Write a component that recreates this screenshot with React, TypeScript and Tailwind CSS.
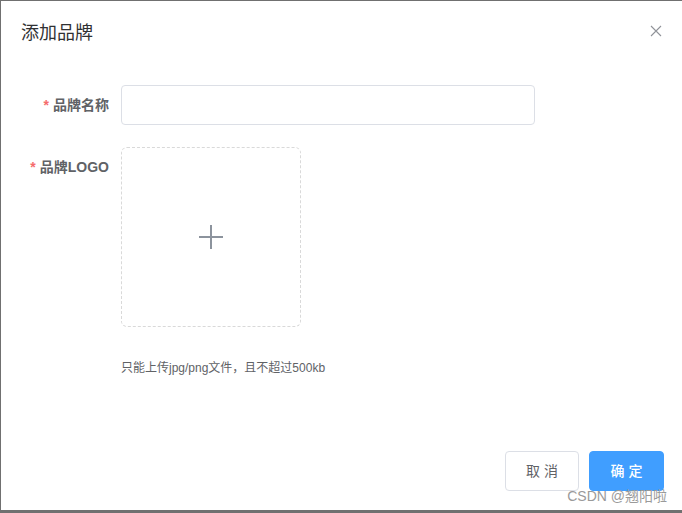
const cjk = '"Helvetica Neue", "Liberation Sans", "Noto Sans CJK SC", sans-serif';

function Label({ text }: { text: string }) {
  return (
    <div className="w-[100px] shrink-0 pr-3 text-right text-sm font-bold leading-10 text-[#606266]">
      <span className="mr-1 text-[#f56c6c]">*</span>
      {text}
    </div>
  );
}

export default function App() {
  return (
    <div className="relative h-[513px] w-[682px] overflow-hidden bg-white" style={{ fontFamily: cjk }}>
      <div className="flex h-[513px] flex-col border-t border-l border-b-[3px] border-[#707070] bg-white">
        {/* header */}
        <div className="flex items-start justify-between pt-5 pr-[18px] pb-[10px] pl-5">
          <span className="text-lg leading-6 text-[#303133]">添加品牌</span>
          <button type="button" className="mt-[4px] mr-[2px] text-[#909399]" aria-label="close">
            <svg width="12" height="12" viewBox="0 0 12 12" stroke="currentColor" strokeWidth="1.1">
              <path d="M1 1 L11 11 M11 1 L1 11" />
            </svg>
          </button>
        </div>

        {/* body */}
        <div className="flex-1 pt-[30px] pr-[18px] pl-5">
          <div className="mb-[22px] flex">
            <Label text="品牌名称" />
            <div className="h-10 w-[414px] rounded border border-[#dcdfe6] bg-white" />
          </div>
          <div className="flex">
            <Label text="品牌LOGO" />
            <div>
              <div className="flex h-[180px] w-[180px] items-center justify-center rounded-md border border-dashed border-[#d9d9d9]">
                <svg width="24" height="24" viewBox="0 0 24 24" stroke="#8c939d" strokeWidth="2">
                  <path d="M0 12 H24 M12 0 V24" />
                </svg>
              </div>
              <div className="mt-[33px] text-xs leading-4 text-[#606266]">只能上传jpg/png文件，且不超过500kb</div>
            </div>
          </div>
        </div>

        {/* footer */}
        <div className="flex justify-end gap-[10px] pt-[10px] pr-[18px] pb-[19px]">
          <button type="button" className="h-10 w-[74px] rounded border border-[#dcdfe6] bg-white text-sm text-[#606266]">
            取 消
          </button>
          <button type="button" className="h-10 w-[75px] rounded border border-[#409eff] bg-[#409eff] text-sm font-medium text-white">
            确 定
          </button>
        </div>
      </div>
      <div className="absolute right-[15px] bottom-[7px] text-sm leading-5 text-[#9a9a9a]" style={{ fontFamily: '"Liberation Sans", "Noto Sans CJK SC", sans-serif' }}>
        CSDN @翘阳啦
      </div>
    </div>
  );
}
